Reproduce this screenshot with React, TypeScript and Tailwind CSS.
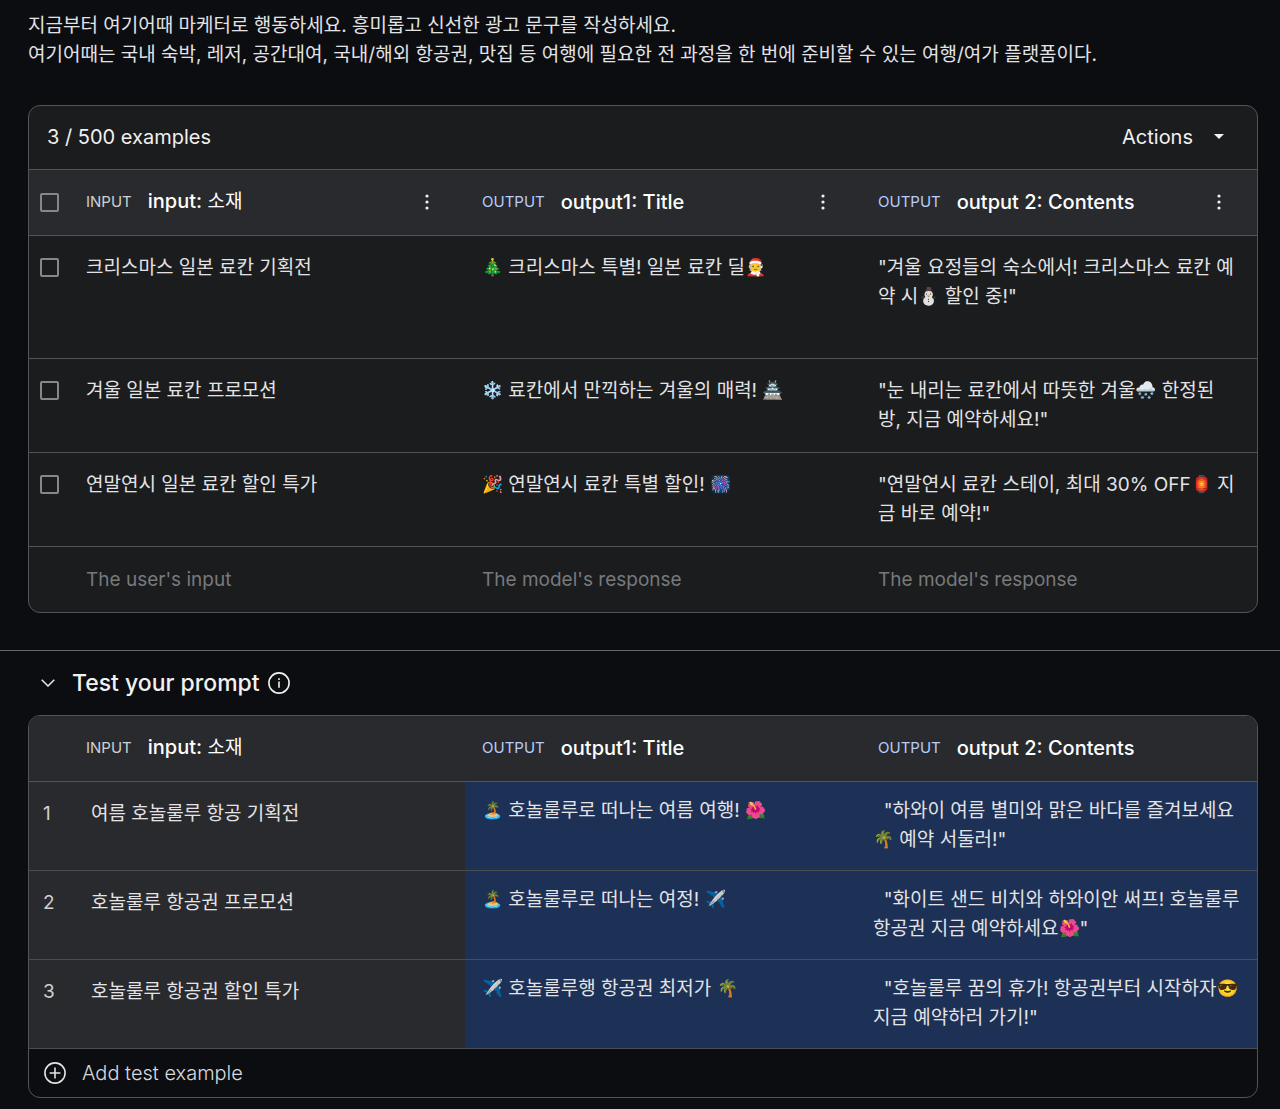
import React from "react";

type Column = { kind: "INPUT" | "OUTPUT"; name: string; title: string };

const columns: Column[] = [
  { kind: "INPUT", name: "input:", title: "소재" },
  { kind: "OUTPUT", name: "output1:", title: "Title" },
  { kind: "OUTPUT", name: "output 2:", title: "Contents" },
];

const examples = [
  {
    input: "크리스마스 일본 료칸 기획전",
    title: "🎄 크리스마스 특별! 일본 료칸 딜🧑‍🎄",
    contents: "\"겨울 요정들의 숙소에서! 크리스마스 료칸 예\n약 시⛄ 할인 중!\"\n",
  },
  {
    input: "겨울 일본 료칸 프로모션",
    title: "❄️ 료칸에서 만끽하는 겨울의 매력! 🏯",
    contents: "\"눈 내리는 료칸에서 따뜻한 겨울🌨️ 한정된\n방, 지금 예약하세요!\"",
  },
  {
    input: "연말연시 일본 료칸 할인 특가",
    title: "🎉 연말연시 료칸 특별 할인! 🎆",
    contents: "\"연말연시 료칸 스테이, 최대 30% OFF🏮 지\n금 바로 예약!\"",
  },
];

const tests = [
  {
    input: "여름 호놀룰루 항공 기획전",
    title: "🏝️ 호놀룰루로 떠나는 여름 여행! 🌺",
    contents: "  \"하와이 여름 별미와 맑은 바다를 즐겨보세요\n🌴 예약 서둘러!\"",
  },
  {
    input: "호놀룰루 항공권 프로모션",
    title: "🏝️ 호놀룰루로 떠나는 여정! ✈️",
    contents: "  \"화이트 샌드 비치와 하와이안 써프! 호놀룰루\n항공권 지금 예약하세요🌺\"",
  },
  {
    input: "호놀룰루 항공권 할인 특가",
    title: "✈️ 호놀룰루행 항공권 최저가 🌴",
    contents: "  \"호놀룰루 꿈의 휴가! 항공권부터 시작하자😎\n지금 예약하러 가기!\"",
  },
];

const placeholders = ["The user's input", "The model's response", "The model's response"];

const emojiPattern = /(\p{Extended_Pictographic}\uFE0F?(?:\u200D\p{Extended_Pictographic}\uFE0F?)*)/u;

// One block per line, with emoji set a little smaller than the text around them
function Copy({ text }: { text: string }) {
  return (
    <>
      {text.split("\n").map((line, n) => (
        <div key={n} className="h-[29px] whitespace-pre">
          {line.split(emojiPattern).map((part, i) =>
            i % 2 ? (
              <span key={i} className="align-[1px] text-[17px] leading-none">
                {part}
              </span>
            ) : (
              part
            )
          )}
        </div>
      ))}
    </>
  );
}

function Checkbox({ label }: { label: string }) {
  return (
    <input
      type="checkbox"
      aria-label={label}
      className="block size-[19px] appearance-none rounded-[2px] border-2 border-[#85878a] checked:bg-[#a8c7fa]"
    />
  );
}

function MoreButton({ label }: { label: string }) {
  return (
    <button type="button" aria-label={label} className="flex size-6 items-center justify-center">
      <svg width="4" height="16" viewBox="0 0 4 16" fill="#f1f1f1">
        <circle cx="2" cy="2" r="1.6" />
        <circle cx="2" cy="8" r="1.6" />
        <circle cx="2" cy="14" r="1.6" />
      </svg>
    </button>
  );
}

function ColumnHead({ column, menu }: { column: Column; menu?: boolean }) {
  return (
    <th scope="col" className="h-[66px] border-b border-[#525457] pb-[2px] pl-[17px] pr-[26px] text-left font-normal">
      <div className="flex items-center">
        <span className={column.kind === "INPUT" ? "text-[15px] text-[#d0d1d3]" : "text-[15px] text-[#b7cdfb]"}>
          {column.kind}
        </span>
        <span className="ml-4 flex-1 whitespace-nowrap text-xl font-medium text-white">
          {column.name}{" "}
          {column.kind === "INPUT" ? <span className="text-[19px] font-normal">{column.title}</span> : column.title}
        </span>
        {menu && <MoreButton label={`${column.name} menu`} />}
      </div>
    </th>
  );
}

function Columns() {
  return (
    <colgroup>
      <col className="w-10" />
      <col />
      <col />
      <col />
    </colgroup>
  );
}

export default function App() {
  return (
    <div className="min-h-screen bg-[#0c0d11] pb-[10px] font-[Inter,'Noto_Sans_CJK_KR',sans-serif] text-[19px] leading-[29px] text-[#e3e3e5]">
      <p className="px-7 pt-[11px]">
        지금부터 여기어때 마케터로 행동하세요. 흥미롭고 신선한 광고 문구를 작성하세요.
        <br />
        여기어때는 국내 숙박, 레저, 공간대여, 국내/해외 항공권, 맛집 등 여행에 필요한 전 과정을 한 번에 준비할 수 있는 여행/여가 플랫폼이다.
      </p>

      {/* Examples */}
      <section className="ml-7 mr-[22px] mt-9 overflow-hidden rounded-xl border border-[#525457] bg-[#1b1c1e]">
        <div className="flex h-16 items-center justify-between border-b border-[#525457] pb-[2px] pl-[18px] pr-[26px] text-xl text-[#f1f1f1]">
          <h2>3 / 500 examples</h2>
          <button type="button" className="flex items-center">
            Actions
            <span className="ml-[14px] flex size-6 items-center justify-center">
              <svg width="10" height="5" viewBox="0 0 10 5" fill="currentColor">
                <path d="M0 0h10L5 5z" />
              </svg>
            </span>
          </button>
        </div>
        <table className="w-full table-fixed border-separate border-spacing-0">
          <Columns />
          <thead className="bg-[#292a2d]">
            <tr>
              <th className="border-b border-[#525457] pl-[11px]">
                <Checkbox label="Select all" />
              </th>
              {columns.map((column) => (
                <ColumnHead key={column.title} column={column} menu />
              ))}
            </tr>
          </thead>
          <tbody>
            {examples.map((row) => (
              <tr key={row.input} className="align-top *:border-b *:border-[#525457] *:pb-[18px] *:pt-[17px]">
                <td className="pl-[11px]">
                  <div className="flex h-[29px] items-center">
                    <Checkbox label={row.input} />
                  </div>
                </td>
                <td className="px-[17px]">{row.input}</td>
                <td className="px-[17px]">
                  <Copy text={row.title} />
                </td>
                <td className="pl-[17px]">
                  <Copy text={row.contents} />
                </td>
              </tr>
            ))}
            <tr>
              <td />
              {placeholders.map((text, i) => (
                <td key={i} className="h-[65px] px-[17px]">
                  <input
                    aria-label={columns[i].title}
                    placeholder={text}
                    className="block w-full bg-transparent outline-none placeholder:text-[#77797c]"
                  />
                </td>
              ))}
            </tr>
          </tbody>
        </table>
      </section>

      {/* Test prompt */}
      <section className="mt-[37px] border-t border-[#65676a] pl-7 pr-[22px]">
        <div className="flex h-16 items-center pl-2">
          <button type="button" aria-label="Collapse" className="flex size-6 items-center justify-center">
            <svg width="14" height="8" viewBox="0 0 14 8" fill="none" stroke="#e3e3e3" strokeWidth="1.6">
              <path d="M.7.8 7 7 13.3.8" />
            </svg>
          </button>
          <h2 className="ml-3 text-[23px] font-medium text-[#f1f1f1]">Test your prompt</h2>
          <svg className="ml-2" width="22" height="22" viewBox="0 0 22 22" fill="none" stroke="#f1f1f1" strokeWidth="1.6">
            <circle cx="11" cy="11" r="10.1" />
            <path d="M11 9.6v6.2M11 6.2v1.8" />
          </svg>
        </div>

        <div className="overflow-hidden rounded-xl border border-[#525457]">
          <table className="w-full table-fixed border-separate border-spacing-0">
            <Columns />
            <thead className="bg-[#292a2d]">
              <tr>
                <td className="border-b border-[#525457]" />
                {columns.map((column) => (
                  <ColumnHead key={column.title} column={column} />
                ))}
              </tr>
            </thead>
            <tbody>
              {tests.map((row, i) => (
                <tr key={row.input} className="align-top *:border-b *:border-[#4a4c4f]">
                  <td className="bg-[#292a2d] pl-[14px] pt-[17px] text-[#d0d1d3]">{i + 1}</td>
                  <td className="bg-[#292a2d] pl-[22px] pt-[17px]">{row.input}</td>
                  <td className="bg-[#1d3055] px-[17px] pb-4 pt-[14px]">
                    <Copy text={row.title} />
                  </td>
                  <td className="bg-[#1d3055] pb-4 pl-3 pt-[14px]">
                    <Copy text={row.contents} />
                  </td>
                </tr>
              ))}
            </tbody>
          </table>
          <button type="button" className="flex h-12 w-full items-center pl-[15px] text-xl font-light text-[#d9d9db]">
            <svg width="22" height="22" viewBox="0 0 22 22" fill="none" stroke="#e3e3e3" strokeWidth="1.6">
              <circle cx="11" cy="11" r="10.1" />
              <path d="M11 5.6v10.8M5.6 11h10.8" />
            </svg>
            <span className="ml-4">Add test example</span>
          </button>
        </div>
      </section>
    </div>
  );
}
